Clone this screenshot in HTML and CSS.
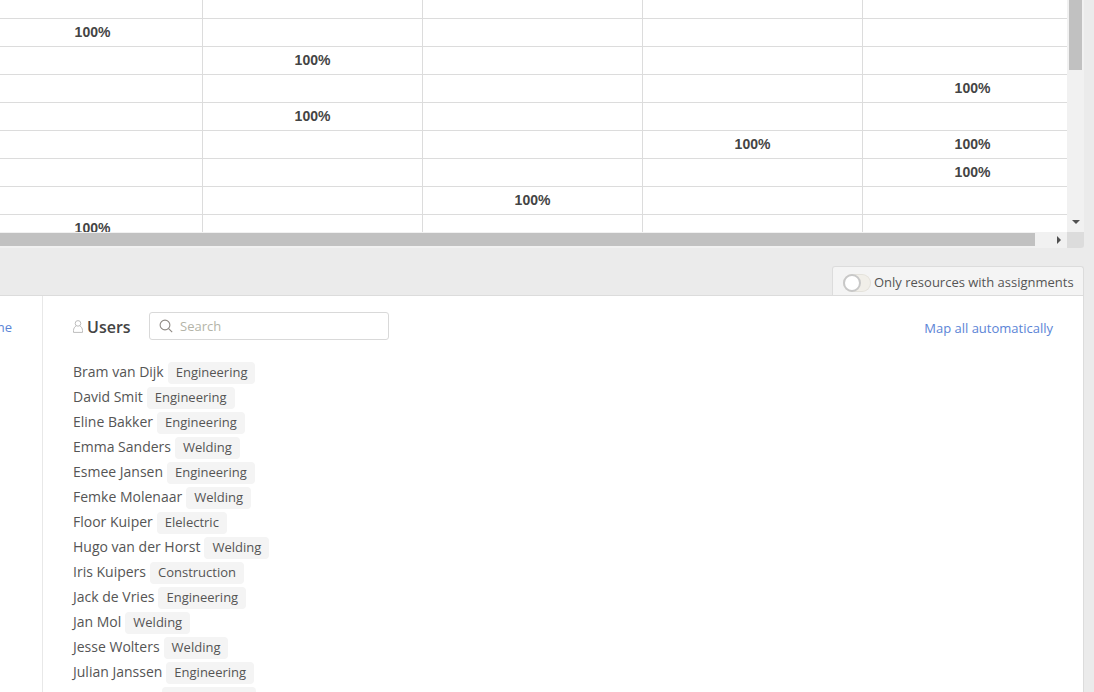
FILE: index.html
```html
<!DOCTYPE html>
<html lang="en">
<head>
    <meta charset="UTF-8">
    <meta name="viewport" content="width=device-width, initial-scale=1.0">
    <title>Resource mapping</title>
    <link rel="stylesheet" href="styles.css">
</head>
<body>
    <div class="grid-wrap">
        <div class="grid-main">
            <div class="grid-view">
                <div class="grid-rows">
                    <div class="grid-row"><div class="cell"></div><div class="cell"></div><div class="cell"></div><div class="cell"></div><div class="cell"></div></div>
                    <div class="grid-row"><div class="cell">100%</div><div class="cell"></div><div class="cell"></div><div class="cell"></div><div class="cell"></div></div>
                    <div class="grid-row"><div class="cell"></div><div class="cell">100%</div><div class="cell"></div><div class="cell"></div><div class="cell"></div></div>
                    <div class="grid-row"><div class="cell"></div><div class="cell"></div><div class="cell"></div><div class="cell"></div><div class="cell">100%</div></div>
                    <div class="grid-row"><div class="cell"></div><div class="cell">100%</div><div class="cell"></div><div class="cell"></div><div class="cell"></div></div>
                    <div class="grid-row"><div class="cell"></div><div class="cell"></div><div class="cell"></div><div class="cell">100%</div><div class="cell">100%</div></div>
                    <div class="grid-row"><div class="cell"></div><div class="cell"></div><div class="cell"></div><div class="cell"></div><div class="cell">100%</div></div>
                    <div class="grid-row"><div class="cell"></div><div class="cell"></div><div class="cell">100%</div><div class="cell"></div><div class="cell"></div></div>
                    <div class="grid-row"><div class="cell">100%</div><div class="cell"></div><div class="cell"></div><div class="cell"></div><div class="cell"></div></div>
                </div>
            </div>
            <div class="scroll-y">
                <div class="scroll-y-thumb"></div>
                <div class="arrow-down"></div>
            </div>
        </div>
        <div class="scroll-x">
            <div class="scroll-x-track">
                <div class="scroll-x-thumb"></div>
                <div class="arrow-right"></div>
            </div>
            <div class="scroll-corner"></div>
        </div>
    </div>

    <div class="tab-bar">
        <div class="tab">
            <span class="toggle"><span class="toggle-knob"></span></span>
            <span class="tab-label">Only resources with assignments</span>
        </div>
    </div>

    <div class="panel">
        <div class="side">
            <a class="side-link" href="#none">None</a>
        </div>
        <section class="users">
            <div class="users-head">
                <svg class="users-icon" width="10" height="13" viewBox="0 0 10 13" fill="none" stroke="#bdbdbd" stroke-width="1">
                    <circle cx="5" cy="3.4" r="2.8"/>
                    <path d="M3.2 5.8C1.6 6.8.5 8.6.5 10.4v2h9v-2c0-1.8-1.1-3.6-2.7-4.6"/>
                </svg>
                <h2 class="users-title">Users</h2>
                <div class="search">
                    <svg width="14" height="14" viewBox="0 0 14 14" fill="none" stroke="#8f8a84" stroke-width="1.1">
                        <circle cx="6" cy="6" r="4.9"/>
                        <path d="M9.6 9.6l3.6 3.6"/>
                    </svg>
                    <input class="search-input" type="text" placeholder="Search" aria-label="Search">
                </div>
                <a class="map-all" href="#map">Map all automatically</a>
            </div>
            <ul class="user-list">
                <li class="user"><span>Bram van Dijk</span><span class="tag">Engineering</span></li>
                <li class="user"><span>David Smit</span><span class="tag">Engineering</span></li>
                <li class="user"><span>Eline Bakker</span><span class="tag">Engineering</span></li>
                <li class="user"><span>Emma Sanders</span><span class="tag">Welding</span></li>
                <li class="user"><span>Esmee Jansen</span><span class="tag">Engineering</span></li>
                <li class="user"><span>Femke Molenaar</span><span class="tag">Welding</span></li>
                <li class="user"><span>Floor Kuiper</span><span class="tag">Elelectric</span></li>
                <li class="user"><span>Hugo van der Horst</span><span class="tag">Welding</span></li>
                <li class="user"><span>Iris Kuipers</span><span class="tag">Construction</span></li>
                <li class="user"><span>Jack de Vries</span><span class="tag">Engineering</span></li>
                <li class="user"><span>Jan Mol</span><span class="tag">Welding</span></li>
                <li class="user"><span>Jesse Wolters</span><span class="tag">Welding</span></li>
                <li class="user"><span>Julian Janssen</span><span class="tag">Engineering</span></li>
                <li class="user"><span>Lisa Vermeer</span><span class="tag">Construction</span></li>
            </ul>
        </section>
    </div>
</body>
</html>
```

FILE: styles.css
```css
html, body {
    height: 100%;
}
body {
    margin: 0;
    height: 692px;
    overflow: hidden;
    background-color: #ebebeb;
    font-family: "Open Sans", sans-serif;
    font-size: 14px;
    color: #555;
}
a {
    color: #5b84d6;
    text-decoration: none;
}

/* grid with its scrollbars */
.grid-wrap {
    width: 1084px;
}
.grid-main {
    display: flex;
    height: 232px;
}
.grid-view {
    flex: 1;
    overflow: hidden;
    background-color: white;
}
.grid-rows {
    margin-top: -9px;
}
.grid-row {
    display: grid;
    grid-template-columns: 220px 220px 220px 220px 220px;
    margin-left: -17px;
    height: 28px;
    box-sizing: border-box;
    border-bottom: 1px solid #dcdcdc;
}
.cell {
    box-sizing: border-box;
    border-right: 1px solid #dcdcdc;
    text-align: center;
    line-height: 27px;
    font-family: "Liberation Sans", Arial, sans-serif;
    font-size: 14px;
    font-weight: bold;
    color: #444;
}
.scroll-y {
    display: flex;
    flex-direction: column;
    justify-content: space-between;
    align-items: center;
    width: 17px;
    background-color: #f1f1f1;
}
.scroll-y-thumb {
    width: 13px;
    height: 70px;
    background-color: #c1c1c1;
}
.arrow-down {
    width: 0;
    height: 0;
    margin-bottom: 8px;
    border-left: 4px solid transparent;
    border-right: 4px solid transparent;
    border-top: 4px solid #505050;
}
.scroll-x {
    display: flex;
    height: 16px;
}
.scroll-x-track {
    flex: 1;
    display: flex;
    justify-content: space-between;
    align-items: center;
    background-color: #f1f1f1;
}
.scroll-x-thumb {
    align-self: flex-start;
    width: 1035px;
    height: 13px;
    margin-top: 1px;
    background-color: #c1c1c1;
}
.arrow-right {
    width: 0;
    height: 0;
    margin-right: 6px;
    border-top: 4px solid transparent;
    border-bottom: 4px solid transparent;
    border-left: 4px solid #505050;
}
.scroll-corner {
    width: 17px;
    background-color: #dcdcdc;
    border-bottom-right-radius: 3px;
}

/* tab above the panel */
.tab-bar {
    display: flex;
    justify-content: flex-end;
    width: 1084px;
    margin-top: 18px;
}
.tab {
    display: flex;
    align-items: center;
    gap: 3px;
    box-sizing: border-box;
    width: 252px;
    height: 29px;
    padding: 4px 0 0 10px;
    background-color: #f4f4f4;
    border: 1px solid #dcdcdc;
    border-bottom: none;
    border-radius: 3px 3px 0 0;
    font-size: 13px;
    color: #555;
}
.tab-label {
    margin-bottom: 3px;
}
.toggle {
    display: block;
    flex: none;
    width: 28px;
    height: 18px;
    background-color: #f1efe9;
    border-radius: 9px;
    box-shadow: inset 0 0 0 1px #e4e2dc;
}
.toggle-knob {
    display: block;
    box-sizing: border-box;
    width: 18px;
    height: 18px;
    background-color: white;
    border: 2px solid #c8c8c8;
    border-radius: 50%;
}

/* users panel */
.panel {
    display: flex;
    box-sizing: border-box;
    width: 1084px;
    height: 397px;
    background-color: white;
    border-top: 1px solid #dcdcdc;
    border-right: 1px solid #dcdcdc;
}
.side {
    display: flex;
    justify-content: flex-end;
    box-sizing: border-box;
    width: 43px;
    padding: 22px 30px 0 0;
    overflow: hidden;
    border-right: 1px solid #e8e8e8;
    font-size: 13px;
    white-space: nowrap;
}
.side-link {
    flex: none;
    height: 18px;
}
.users {
    flex: 1;
    padding: 16px 30px 0;
}
.users-head {
    display: flex;
    align-items: center;
    height: 28px;
}
.users-icon {
    margin-top: 1px;
    margin-right: 4px;
}
.users-title {
    margin: 2px 0 0;
    font-size: 16px;
    font-weight: 600;
    color: #444;
}
.search {
    display: flex;
    align-items: center;
    gap: 7.5px;
    box-sizing: border-box;
    width: 240px;
    height: 28px;
    margin-left: 18px;
    padding-left: 9px;
    border: 1px solid #d9d9d9;
    border-radius: 3px;
}
.search-input {
    flex: 1;
    min-width: 0;
    padding: 0;
    border: none;
    outline: none;
    font-family: "Open Sans", sans-serif;
    font-size: 13px;
}
.search-input::placeholder {
    color: #b4b4a8;
}
.map-all {
    margin-top: 4px;
    margin-left: auto;
    font-size: 13px;
}
.user-list {
    margin: 19px 0 0;
    padding: 0;
    list-style: none;
}
.user {
    display: flex;
    align-items: center;
    gap: 4px;
    height: 25px;
    white-space: nowrap;
}
.tag {
    height: 22px;
    margin-top: 2px;
    padding: 0 8px;
    line-height: 21px;
    background-color: #f4f4f4;
    border-radius: 4px;
    font-size: 13px;
}
```
